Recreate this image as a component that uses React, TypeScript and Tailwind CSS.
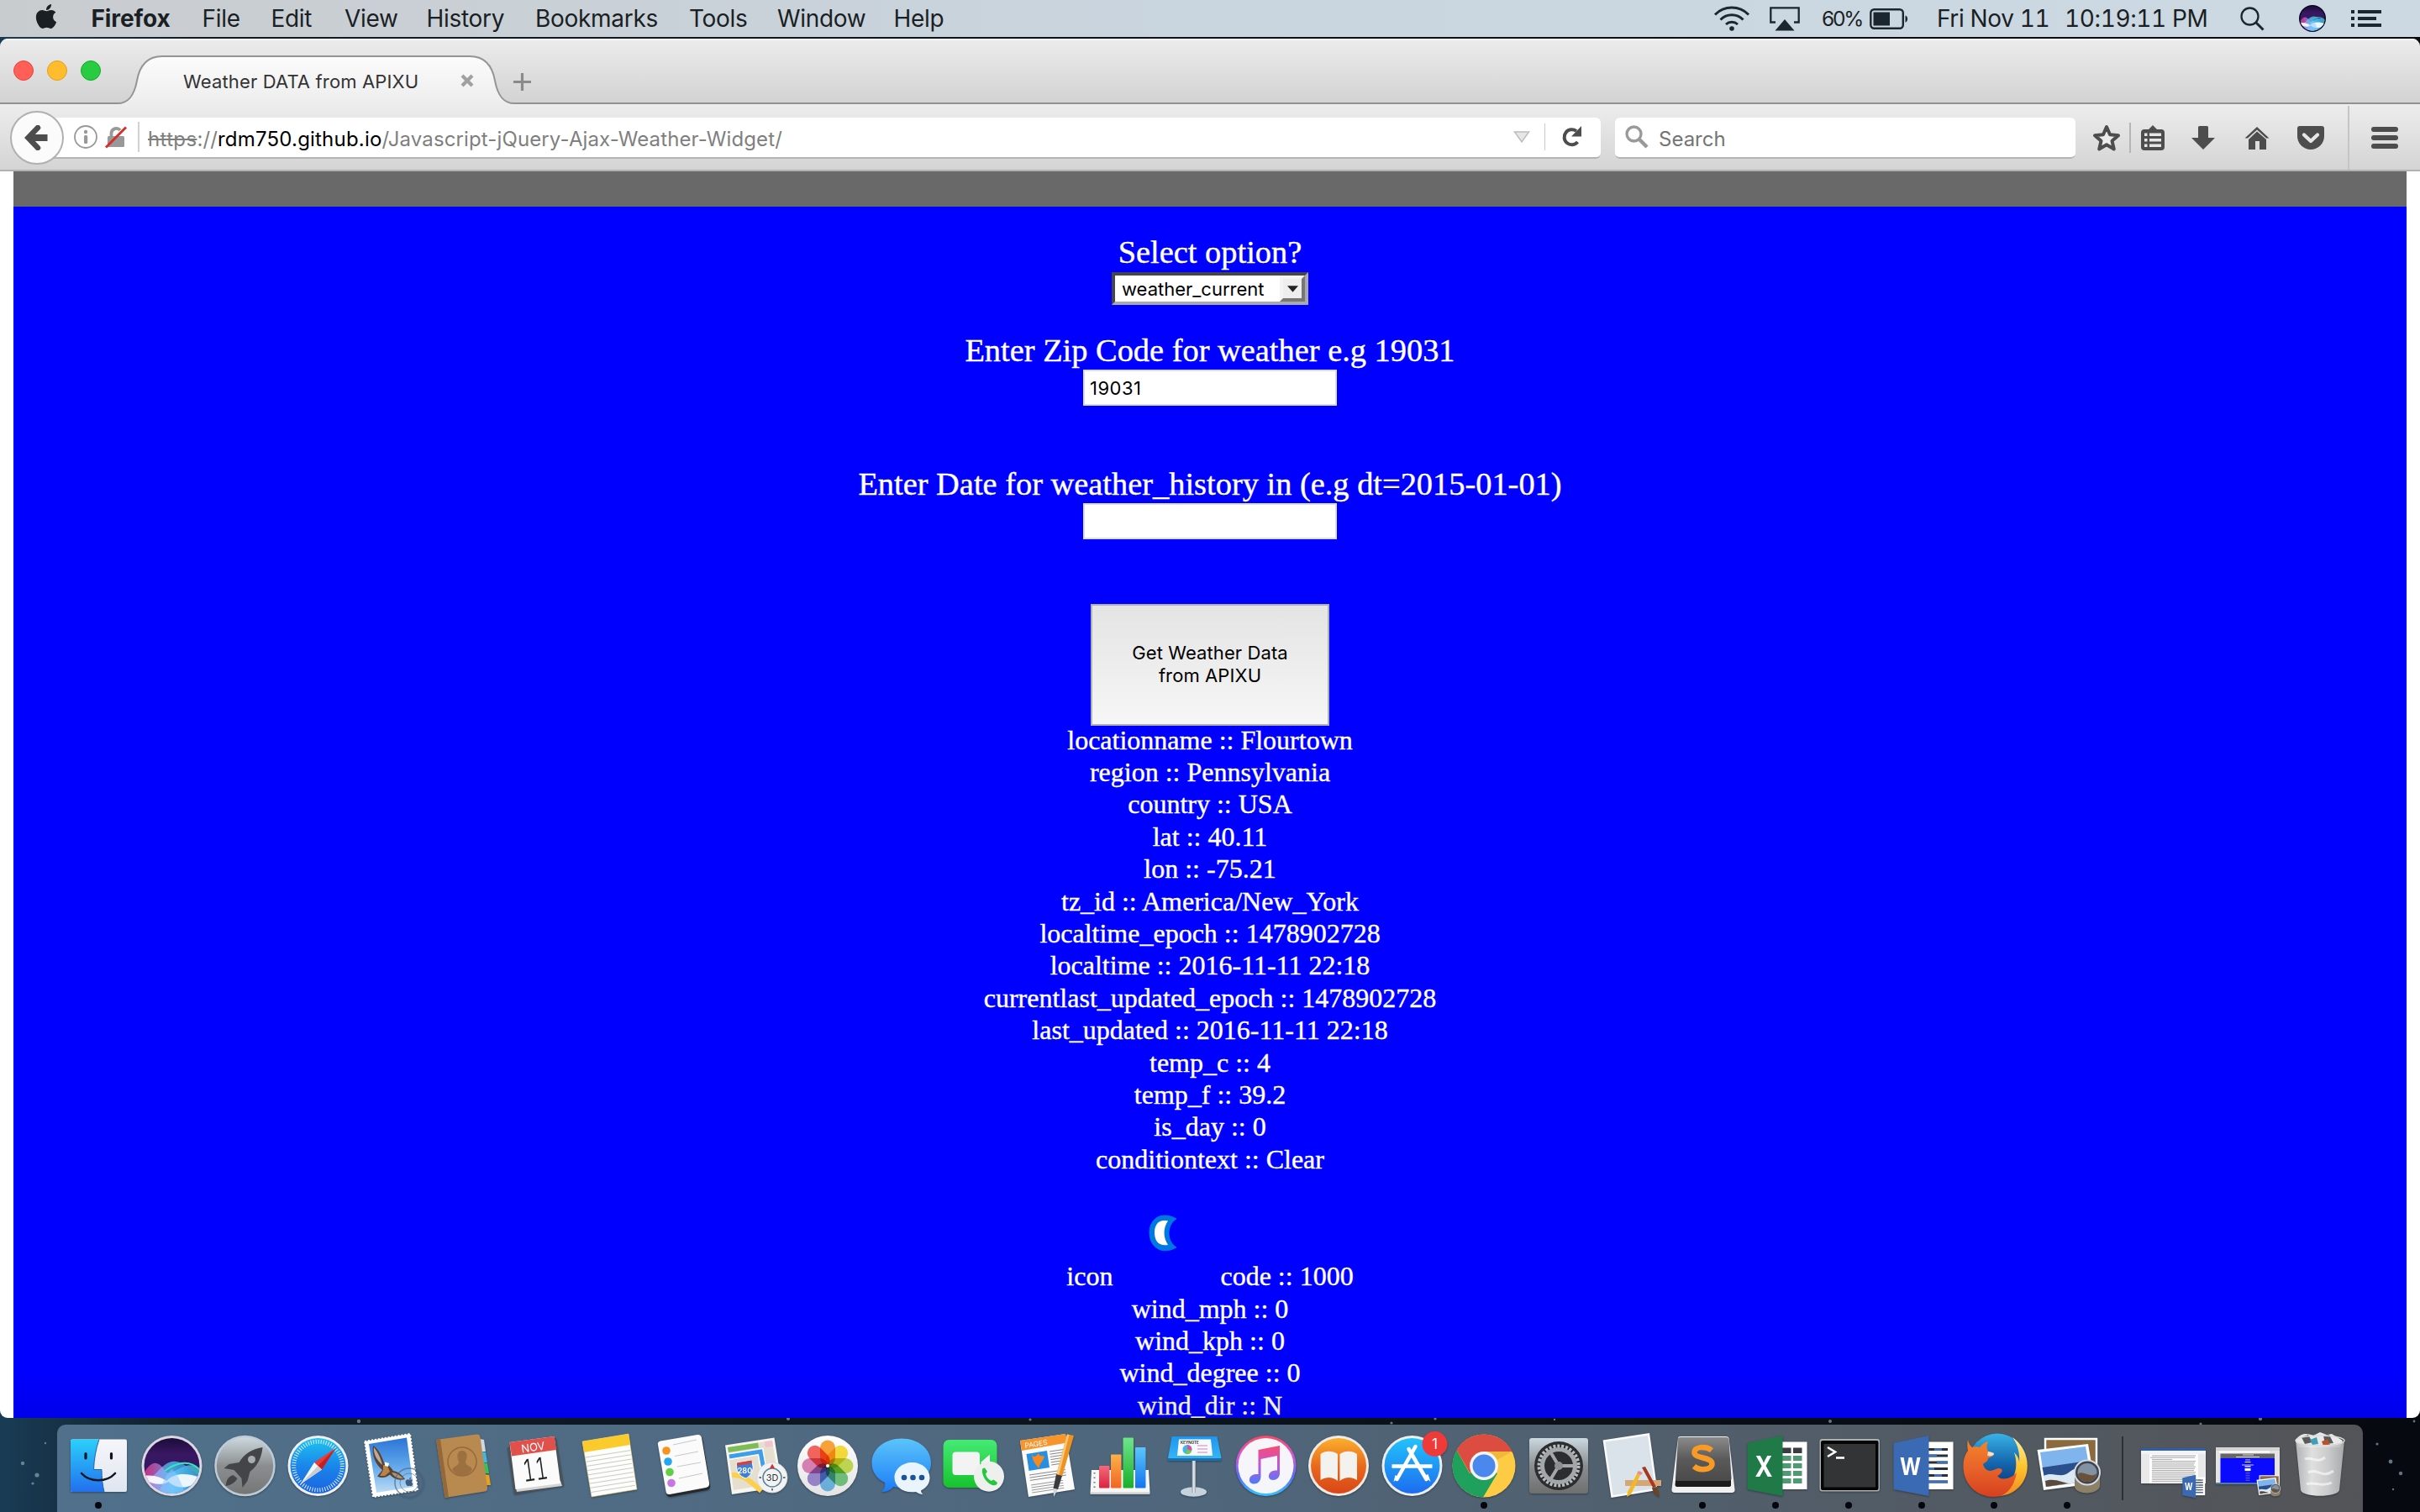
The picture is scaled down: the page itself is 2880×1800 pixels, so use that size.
import type { ReactNode } from "react";
import { FaApple } from "react-icons/fa";

function Grad({ id, stops, x2 = 0, y2 = 1 }: { id: string; stops: string[]; x2?: number; y2?: number }) {
  return (
    <linearGradient id={id} x1="0" y1="0" x2={x2} y2={y2}>
      {stops.map((c, i) => (
        <stop key={i} offset={i / (stops.length - 1)} stopColor={c} />
      ))}
    </linearGradient>
  );
}

/* ---------- menu bar ---------- */

const menus: [string, string][] = [
  ["File", "w-[82px]"],
  ["Edit", "w-[87.5px]"],
  ["View", "w-[97.5px]"],
  ["History", "w-[129.5px]"],
  ["Bookmarks", "w-[183px]"],
  ["Tools", "w-[105px]"],
  ["Window", "w-[138.5px]"],
  ["Help", "w-[70px]"],
];

function SiriArt({ id }: { id: string }) {
  return (
    <g>
      <defs>
        <Grad id={id + "bg"} stops={["#0d0726", "#3a1763", "#2a1a5e", "#25407a"]} />
        <Grad id={id + "w1"} stops={["#ff2f8e", "#7fb6ff", "#35e0c4"]} x2={1} y2={0} />
        <Grad id={id + "w2"} stops={["#d08bff", "#4bd9ff", "#2a7bd6"]} x2={1} y2={0} />
        <clipPath id={id + "c"}>
          <circle cx="42" cy="42" r="33" />
        </clipPath>
      </defs>
      <g clipPath={`url(#${id}c)`}>
        <rect width="84" height="84" fill={`url(#${id}bg)`} />
        <path d="M8 52C18 34 26 36 34 48S60 26 78 50V84H8Z" fill={`url(#${id}w1)`} opacity="0.75" />
        <path d="M8 60C22 58 28 40 42 37S64 50 78 54V84H8Z" fill={`url(#${id}w2)`} opacity="0.7" />
        <path d="M8 54C20 52 30 56 36 60C44 50 62 50 78 57C66 68 50 72 38 61C30 66 18 64 8 58Z" fill="#fff" opacity="0.9" />
        <path d="M24 84C28 66 36 50 42 46C50 52 56 68 60 84Z" fill="#8ec5ff" opacity="0.5" />
        <path d="M34 48S60 26 78 50" fill="none" stroke="#37e6c0" strokeWidth="2" />
      </g>
    </g>
  );
}

function MenuBar() {
  return (
    <header className="flex h-[44px] shrink-0 items-center bg-linear-to-r from-[#c9cccf] via-[#c9d5df] to-[#cdd9e2] text-[28px] tracking-[-0.3px] whitespace-nowrap text-[#1a1f24]">
      <FaApple className="mt-[-5px] ml-[39px] h-[33px] w-[32px] shrink-0" />
      <span className="ml-[37.5px] w-[132px] font-bold tracking-[-0.1px]">Firefox</span>
      {menus.map(([label, w]) => (
        <span key={label} className={w}>{label}</span>
      ))}
      <div className="ml-auto flex items-center">
        <svg className="h-[30px] w-[44px]" viewBox="0 0 44 30" fill="none" stroke="#1b262e" strokeWidth="3">
          <path d="M2 10.5a28 28 0 0 1 40 0M8.5 16.500a19 19 0 0 1 27 0M15 22a10.500 10.500 0 0 1 14 0" />
          <circle cx="22" cy="27" r="2.800" fill="#1b262e" stroke="none" />
        </svg>
        <svg className="ml-[23px] h-[30px] w-[36px]" viewBox="0 0 36 30">
          <path d="M7 19.500H1.300V2.300H34.700V19.500H29" fill="none" stroke="#1b262e" strokeWidth="2.300" />
          <path d="M18 16L29.500 29.500H6.500Z" fill="#1b262e" />
        </svg>
        <span className="ml-[26px] w-[57px] text-[24.5px] tracking-[-2.200px]">60%</span>
        <svg className="mt-[1px] h-[26px] w-[47px]" viewBox="0 0 47 26">
          <rect x="1.300" y="1.300" width="38.500" height="22.500" rx="4" fill="none" stroke="#1b262e" strokeWidth="2.400" />
          <rect x="4.500" y="4.500" width="19.500" height="16" fill="#1b262e" />
          <path d="M42.500 8.500c3.500 1 3.500 7 0 8.200z" fill="#1b262e" />
        </svg>
        <span className="ml-[33px] w-[152px] tracking-[-0.350px] tabular-nums">Fri Nov 11</span>
        <span className="w-[209px] tracking-[-0.400px] tabular-nums">10:19:11 PM</span>
        <svg className="h-[29px] w-[29px]" viewBox="0 0 29 29" fill="none" stroke="#1b262e">
          <circle cx="11.500" cy="11.500" r="10" strokeWidth="2.300" />
          <path d="M18.500 18.500L27.500 27.500" strokeWidth="3" />
        </svg>
        <svg className="ml-[41px] size-[32px]" viewBox="6 6 72 72">
          <circle cx="42" cy="42" r="36" fill="#04041c" />
          <SiriArt id="sm" />
        </svg>
        <svg className="mr-[46px] ml-[30px] h-[20px] w-[36px]" viewBox="0 0 36 20" fill="#1b262e">
          <path d="M0 0h4v4H0zM8 0h28v4H8zM0 8h4v4H0zM8 8h22v4H8zM0 16h4v4H0zM8 16h28v4H8z" />
        </svg>
      </div>
    </header>
  );
}

/* ---------- browser chrome ---------- */

function TabStrip() {
  return (
    <div className="flex h-[78px] bg-linear-to-b from-[#ececec] to-[#d2d2d2] shadow-[inset_0_2px_0_#f6f6f6,inset_0_-2px_0_#929292]">
      <div className="mt-[26px] ml-[16px] flex h-[24px] w-[124px] gap-[16px]">
        <i className="size-[24px] rounded-full border border-[#e2463f] bg-[#ff5f57]" />
        <i className="size-[24px] rounded-full border border-[#dea123] bg-[#ffbd2e]" />
        <i className="size-[24px] rounded-full border border-[#12ac28] bg-[#28cc40]" />
      </div>
      <div className="relative flex h-[78px] w-[476px] items-center pt-[24px] pl-[78px]">
        <svg className="absolute inset-0 h-[78px] w-[476px]" viewBox="0 0 476 78">
          <defs>
            <Grad id="tab" stops={["#fcfcfc", "#ededed"]} />
          </defs>
          <path d="M0 78V77C14 77 20 66 23 50C26 33 34 21 53 21H419C438 21 446 33 449 50C452 66 458 77 472 77V78Z" fill="url(#tab)" />
          <path d="M0 77C14 77 20 66 23 50C26 33 34 21 53 21H419C438 21 446 33 449 50C452 66 458 77 472 77" fill="none" stroke="#949494" strokeWidth="2" />
        </svg>
        <span className="relative w-[330px] text-[22px] tracking-[0.150px] whitespace-nowrap text-[#333]">Weather DATA from APIXU</span>
        <svg className="relative mt-[-3px] size-[16px]" viewBox="0 0 16 16" stroke="#a0a0a0" strokeWidth="4.200">
          <path d="M2 2L14 14M14 2L2 14" />
        </svg>
      </div>
      <svg className="mt-[41px] ml-[-5px] size-[21px]" viewBox="0 0 21 21" stroke="#8a8a8a" strokeWidth="3.200">
        <path d="M10.500 0V21M0 10.500H21" />
      </svg>
    </div>
  );
}

function Toolbar() {
  return (
    <div className="flex h-[80px] items-center border-b-[2px] border-[#b1b1b1] bg-linear-to-b from-[#ededed] to-[#d4d4d4] pt-[2px] text-[24px] whitespace-nowrap">
      <div className="z-10 ml-[12px] flex size-[64px] shrink-0 items-center justify-center rounded-full border-2 border-[#b0b0b0] bg-[#fbfbfb]">
        <svg className="mr-[3px] h-[30px] w-[28px]" viewBox="0 0 28 30" fill="none" stroke="#4d4d4d" strokeWidth="8">
          <path d="M27.500 15H8" />
          <path d="M16 3L4.500 15L16 27" strokeWidth="6.500" strokeLinecap="round" strokeLinejoin="miter" />
        </svg>
      </div>
      <div className="ml-[-16px] flex h-[49px] w-[1845px] items-center rounded-r-[6px] border-b-2 border-[#b4b4b4] bg-white">
        <svg className="ml-[28px] size-[28px]" viewBox="0 0 28 28">
          <circle cx="14" cy="14" r="13" fill="none" stroke="#999" strokeWidth="1.800" />
          <circle cx="14" cy="8" r="2.200" fill="#999" />
          <rect x="12" y="12" width="4.200" height="10" rx="1.500" fill="#999" />
        </svg>
        <svg className="ml-[9px] h-[27px] w-[26px]" viewBox="0 0 26 27">
          <rect x="3" y="12" width="20" height="13" rx="1.500" fill="#999" />
          <path d="M7.500 13V8a6 6 0 0 1 10.500-3" fill="none" stroke="#999" strokeWidth="3.800" />
          <path d="M1 25.500L25 1.500" stroke="#d92d28" strokeWidth="3" />
        </svg>
        <i className="ml-[13px] h-[36px] w-[2px] bg-[#d2d2d2]" />
        <span className="mt-[5px] ml-[10px] tracking-[0.120px] text-[#7f7f7f]">
          <span className="tracking-[0.350px] line-through decoration-[2px]">https</span>://
          <span className="tracking-[0.200px] text-black">rdm750.github.io</span>/Javascript-jQuery-Ajax-Weather-Widget/
        </span>
        <svg className="ml-auto h-[14px] w-[20px]" viewBox="0 0 20 14">
          <path d="M1.500 1H18.500L10 13Z" fill="#e6e6e6" stroke="#bdbdbd" strokeWidth="1.500" />
        </svg>
        <i className="ml-[17px] h-[32px] w-[1.500px] bg-[#c8c8c8]" />
        <svg className="mr-[22px] ml-[20px] h-[26px] w-[24px]" viewBox="0 0 24 26">
          <path d="M18.500 19A9 9 0 1 1 17 6" fill="none" stroke="#4d4d4d" strokeWidth="4" />
          <path d="M23 0V12.500H11Z" fill="#4d4d4d" />
        </svg>
      </div>
      <div className="ml-[17px] flex h-[49px] w-[548px] items-center rounded-[6px] border-b-2 border-[#b4b4b4] bg-white">
        <svg className="ml-[12px] size-[28px]" viewBox="0 0 28 28" fill="none" stroke="#999">
          <circle cx="10.500" cy="10.500" r="8.500" strokeWidth="3.300" />
          <path d="M17 17L26 26" strokeWidth="4.500" />
        </svg>
        <span className="mt-[5px] ml-[12px] text-[#757575]">Search</span>
      </div>
      <svg className="ml-[20px] h-[33px] w-[34px]" viewBox="0 0 34 33">
        <path d="M17 3L21 12.300L31 13.200L23.500 19.800L25.800 29.500L17 24.300L8.200 29.500L10.500 19.800L3 13.200L13 12.300Z" fill="#ececec" stroke="#4d4d4d" strokeWidth="4" strokeLinejoin="round" />
      </svg>
      <i className="ml-[10px] h-[36px] w-[2px] bg-[#b5b5b5]" />
      <svg className="ml-[12px] h-[30px] w-[28px]" viewBox="0 0 28 30">
        <path d="M4 5H9L14 0L19 5H24a4 4 0 0 1 4 4V26a4 4 0 0 1-4 4H4a4 4 0 0 1-4-4V9a4 4 0 0 1 4-4Z" fill="#4d4d4d" />
        <path d="M10 9.500H24v3.500H10zM10 16H24v3.500H10zM10 22.500H24v3.500H10zM4 9.500h3.500v3.500H4zM4 16h3.500v3.500H4zM4 22.500h3.500v3.500H4z" fill="#e6e6e6" />
      </svg>
      <svg className="ml-[32px] h-[28px] w-[28px]" viewBox="0 0 28 28" fill="#4d4d4d">
        <path d="M8 1.500a1.500 1.500 0 0 1 1.500-1.500h9a1.500 1.500 0 0 1 1.500 1.500V14H28L14 28L0 14H8Z" />
      </svg>
      <svg className="ml-[34px] h-[28px] w-[32px]" viewBox="0 0 32 28" fill="#4d4d4d">
        <path d="M16 6.500L27 16V28H19V18H14V28H6V16Z" />
        <path d="M1.500 14.500H5L16 4.500L27 14.500H30.500L16 1Z" />
      </svg>
      <svg className="ml-[32px] h-[28px] w-[32px]" viewBox="0 0 32 28">
        <path d="M3 0H29a3 3 0 0 1 3 3V12a16 16 0 0 1-32 0V3a3 3 0 0 1 3-3Z" fill="#4d4d4d" />
        <path d="M8 10.500L16 18L24 10.500" fill="none" stroke="#e6e6e6" strokeWidth="4.300" strokeLinecap="round" strokeLinejoin="round" />
      </svg>
      <i className="ml-[28px] h-full w-[2px] bg-[#c5c5c5]" />
      <svg className="ml-[26px] h-[26px] w-[32px]" viewBox="0 0 32 26" fill="#4d4d4d">
        <rect width="32" height="6" rx="3" />
        <rect y="10" width="32" height="6" rx="3" />
        <rect y="20" width="32" height="6" rx="3" />
      </svg>
    </div>
  );
}

/* ---------- web page ---------- */

const before = [
  "locationname :: Flourtown",
  "region :: Pennsylvania",
  "country :: USA",
  "lat :: 40.11",
  "lon :: -75.21",
  "tz_id :: America/New_York",
  "localtime_epoch :: 1478902728",
  "localtime :: 2016-11-11 22:18",
  "currentlast_updated_epoch :: 1478902728",
  "last_updated :: 2016-11-11 22:18",
  "temp_c :: 4",
  "temp_f :: 39.2",
  "is_day :: 0",
  "conditiontext :: Clear",
];
const after = ["wind_mph :: 0", "wind_kph :: 0", "wind_degree :: 0", "wind_dir :: N"];

function Page() {
  return (
    <main className="flex min-h-0 flex-1 flex-col bg-white px-[16px]">
      <div className="h-[42px] shrink-0 bg-[#696969]" />
      <div className="relative flex min-h-0 flex-1 flex-col items-center overflow-hidden bg-[#0000ff] pt-[32px] font-['Liberation_Serif',serif] text-[38.4px] leading-[44px] whitespace-nowrap text-white [-webkit-text-stroke:0.4px_#fff]">
        <label>Select option?</label>
        <div className="mt-[2px] flex h-[39px] w-[234px] shrink-0 border-[4px] border-t-[#464646] border-r-[#a9a9a9] border-b-[#a9a9a9] border-l-[#464646] bg-white font-['Inter',sans-serif] text-[22px] leading-[32px] text-black [-webkit-text-stroke:0]">
          <span className="flex-1 pl-[8px]">weather_current</span>
          <span className="flex w-[30px] items-center justify-center border-[4px] border-t-[#f4f4f4] border-r-[#777] border-b-[#777] border-l-[#f4f4f4] bg-[#eee]">
            <svg className="h-[8px] w-[13px]" viewBox="0 0 14 8">
              <path d="M0 0H14L7 8Z" fill="#222" />
            </svg>
          </span>
        </div>
        <label className="mt-[32px]">Enter Zip Code for weather e.g 19031</label>
        <div className="mt-[1px] h-[43px] w-[302px] shrink-0 border-2 border-[#dcdcdc] bg-white pl-[6px] font-['Inter',sans-serif] text-[22px] leading-[40px] tracking-[0.500px] text-black [-webkit-text-stroke:0]">19031</div>
        <label className="mt-[71px]">Enter Date for weather_history in (e.g dt=2015-01-01)</label>
        <div className="mt-[1px] h-[43px] w-[302px] shrink-0 border-2 border-[#dcdcdc] bg-white" />
        <button className="mt-[77px] h-[145px] w-[284px] shrink-0 border-2 border-[#b0b0b0] bg-linear-to-b from-[#e4e4e4] to-[#f6f6f6] pb-[2px] font-['Inter',sans-serif] text-[22px] leading-[27px] tracking-[0.100px] text-black [-webkit-text-stroke:0]">
          Get Weather Data
          <br />
          from APIXU
        </button>
        <div className="mt-[-2.500px] flex flex-col items-center text-[32px] leading-[38.4px]">
          {before.map((t) => (
            <p key={t}>{t}</p>
          ))}
          <div className="flex h-[139.400px] items-end">
            <span>icon</span>
            <svg className="mb-[8px] size-[128px]" viewBox="0 0 128 128">
              <path d="M76 48C58 38 44 48 44 64.500S58 92 76 82C64 75 64 55 76 48Z" fill="#0078e0" stroke="#0078e0" strokeWidth="1" strokeLinejoin="round" />
              <path d="M66 50.500C54 48 50 56 50 64.500S54 81 66 79C60 70 60 59 66 50.500Z" fill="#fff" />
            </svg>
            <span>code :: 1000</span>
          </div>
          {after.map((t) => (
            <p key={t} className="last:pt-[3px] last:leading-[32px]">{t}</p>
          ))}
        </div>
        <div className="absolute inset-x-0 bottom-0 h-[56px] bg-linear-to-b from-transparent to-black/8" />
      </div>
    </main>
  );
}

/* ---------- dock ---------- */

function Art({ children }: { children: ReactNode }) {
  return (
    <svg className="size-[84px] shrink-0 overflow-visible drop-shadow-[0_1px_1px_rgba(0,0,0,0.35)]" viewBox="0 0 84 84">
      {children}
    </svg>
  );
}

function ScribbleLines({ x, y, w, n, gap, color = "#c9c9c9", tilt = -8 }: { x: number; y: number; w: number; n: number; gap: number; color?: string; tilt?: number }) {
  return (
    <g stroke={color} strokeWidth="1">
      {Array.from({ length: n }, (_, i) => (
        <path key={i} d={`M${x + i * gap * 0.14} ${y + i * gap}l${w} ${(w * tilt) / 54}`} />
      ))}
    </g>
  );
}

const photoPetals = ["#f7941d", "#f2d41f", "#b4cf3a", "#5cb56a", "#5aa5d8", "#8a74c0", "#cf6fa6", "#f05045"];

function PreviewArt() {
  return (
    <g>
      <rect x="16" y="10" width="61" height="40" fill="#8a6a3e" stroke="#fff" strokeWidth="2.500" />
      <path d="M6.500 23L67 16L75 63L14 71Z" fill="#fff" />
      <path d="M10 26L64 19L67.500 39L13 46Z" fill="#7fb4ec" />
      <path d="M12.500 44L67 36L71 60L17 67Z" fill="#2a4f8c" />
      <path d="M14 54C26 48 34 58 44 50S60 44 69 46L71 60L17 67Z" fill="#dbe9f4" />
      <path d="M16 60C26 56 38 62 44 63L17 67Z" fill="#5c4a3a" />
      <path d="M51 50V67C53 77 79 77 81 66V50Z" fill="#8d8068" />
      <ellipse cx="66" cy="50" rx="15" ry="14.500" fill="#3b4450" stroke="#d9d9d9" strokeWidth="2" />
      <ellipse cx="66" cy="50" rx="11.500" ry="11" fill="#8292a2" />
      <path d="M55 52C60 46 70 58 77 51C76 64 57 64 55 52Z" fill="#6a5138" />
    </g>
  );
}

function WordArt() {
  return (
    <g>
      <path d="M44 13.500H79.500V70H44Z" fill="#fff" />
      <g strokeWidth="2.800" stroke="#2b2f36">
        <path d="M50 22.500H73M50 30H73M50 38H73M50 45.500H73M50 53.500H73M50 61H73" />
      </g>
      <g strokeWidth="2.800" stroke="#3f6fb5">
        <path d="M57 22.500H66M50 30H60M60 38H73M50 45.500H57M57 53.500H66M50 61H73" />
      </g>
      <path d="M8.500 15L50.500 6V78L8.500 70Z" fill="#3a6ab4" />
      <text x="28.500" y="53" textAnchor="middle" fontFamily="Inter" fontWeight="700" fontSize="29" textLength="25" lengthAdjust="spacingAndGlyphs" fill="#fff">W</text>
    </g>
  );
}

const apps: { name: string; open?: boolean; art: ReactNode }[] = [
  {
    name: "Finder",
    open: true,
    art: (
      <>
        <defs>
          <Grad id="fa" stops={["#2bd0fb", "#2270ee"]} />
          <Grad id="fb" stops={["#f6f6fa", "#dfe6f0"]} />
        </defs>
        <rect x="9" y="10.500" width="67" height="62.500" rx="2" fill="url(#fb)" />
        <path d="M11 10.500H43C39 22 37 34 36.500 46.500H46C46 56 47 65 49 73H11a2 2 0 0 1-2-2V12.500a2 2 0 0 1 2-2Z" fill="url(#fa)" />
        <path d="M43 10.500C39 22 37 34 36.500 46.500H46C46 56 47 65 49 73" fill="none" stroke="#2a5fae" strokeWidth="1" />
        <path d="M27 27.500V33M57.500 27.500V33" stroke="#10161f" strokeWidth="3.200" strokeLinecap="round" />
        <path d="M22 51C32 62 52 62 62 51" fill="none" stroke="#10161f" strokeWidth="2.600" strokeLinecap="round" />
      </>
    ),
  },
  {
    name: "Siri",
    art: (
      <g transform="translate(1.5 0)">
        <circle cx="42" cy="42" r="36" fill="#dcd8e2" />
        <SiriArt id="lg" />
      </g>
    ),
  },
  {
    name: "Launchpad",
    art: (
      <g transform="translate(1.5 0)">
        <defs>
          <Grad id="lp" stops={["#cfdbe0", "#8b8e90", "#757575"]} />
        </defs>
        <circle cx="42" cy="42" r="35" fill="url(#lp)" stroke="#bccbd6" strokeWidth="2.500" />
        <g fill="#434548">
          <path d="M63 20C50 22 41 28 35 38L23 40L17 45L29 47L38 57L39 68L45 60L48 49C57 42 62 32 63 20Z" />
          <path d="M28 53C21 55 20 60 19 66C26 65 30 62 33 57Z" />
        </g>
        <circle cx="50" cy="34.500" r="4.500" fill="#a7adb0" />
      </g>
    ),
  },
  {
    name: "Safari",
    art: (
      <g transform="translate(1.5 0)">
        <defs>
          <Grad id="sf" stops={["#1fc4ef", "#1a86ea", "#1b62e0"]} />
        </defs>
        <circle cx="42" cy="42" r="36" fill="#eef0f2" />
        <circle cx="42" cy="42" r="33" fill="url(#sf)" />
        <circle cx="42" cy="42" r="28.800" fill="none" stroke="#e2f1fb" strokeWidth="5" strokeDasharray="1 2.016" />
        <path d="M63 21L46.500 46.500L37.500 38Z" fill="#ec3a34" />
        <path d="M63 21L46.500 46.500L42 42Z" fill="#c4201f" />
        <path d="M21 64L37.500 38L46.500 46.500Z" fill="#f6f6f6" />
        <path d="M21 64L42 42L46.500 46.500Z" fill="#c9cdd2" />
      </g>
    ),
  },
  {
    name: "Mail",
    art: (
      <>
        <defs>
          <Grad id="ml" stops={["#2c74d6", "#5fa6ea", "#bcdcf4"]} />
        </defs>
        <path d="M12 13L66 4L75 71L22 79Z" fill="#fff" stroke="#fff" strokeWidth="2" strokeDasharray="2.200 1.800" />
        <path d="M17 16L62 8.500L70 67L26 74Z" fill="url(#ml)" />
        <path d="M22 18C28 21 33 31 35.500 40C41 40 44 45 46 48C52 49 57 53 60 58C52 60 46 57 42 52.500C37 56.500 32 57 27 54.500L33 47C25 40 20 30 22 18Z" fill="#5d432f" />
        <path d="M23 20C27 25 31 32 33 41C27 36 22 28 23 20Z" fill="#b9ab9c" />
        <path d="M44 50C50 50 55 54 58 57C52 58 47 55 44 50Z" fill="#a8977f" />
        <path d="M34 41l5 1 3 7-6 5-6 0 4-7z" fill="#b88248" />
        <path d="M36 37.500l5 1.500-1 4-4-1z" fill="#fff" />
        <circle cx="65" cy="62" r="17" fill="none" stroke="#4d6580" strokeOpacity="0.700" strokeWidth="1.500" />
        <circle cx="65" cy="62" r="11" fill="none" stroke="#4d6580" strokeOpacity="0.600" strokeWidth="1" />
        <g transform="translate(59 55) scale(0.75)" color="#435c7c">
          <FaApple />
        </g>
      </>
    ),
  },
  {
    name: "Contacts",
    art: (
      <>
        <path d="M62 10L67 11L69 25H64Z" fill="#cfd9de" />
        <path d="M64 25L69 26L71 38H66Z" fill="#46b6dc" />
        <path d="M66 38L71 39L73 51H67Z" fill="#3fbd5a" />
        <path d="M67 52L73 53L75 65H69Z" fill="#e8a21c" />
        <path d="M10 11L58 4.500Q62 4 62.500 8L71 68Q71.500 72 68 72.500L20.500 80Z" fill="#b98a50" />
        <path d="M10 11L15 10.300L25 79.300L20.500 80Z" fill="#94683a" />
        <circle cx="41" cy="37" r="17" fill="none" stroke="#96693a" strokeWidth="1.500" />
        <path d="M41 24C47 24 48 31 45 37C45 42 51 42 53 46C48 56 34 56 29 46C32 42 37 42 37 37C34 31 35 24 41 24Z" fill="#9c7040" />
      </>
    ),
  },
  {
    name: "Calendar",
    art: (
      <>
        <path d="M9 20L67 9L76 66L17 76Z" fill="#4a5258" />
        <path d="M18.500 66L72 60L74 66L20 73Z" fill="#d5d5d5" />
        <path d="M11.500 14L64.500 7L72 63L18.500 70Z" fill="#fbfbfb" />
        <path d="M11.500 14L64.500 7L67 23L14 30.500Z" fill="#e2504b" />
        <text transform="translate(40 24.500) rotate(-8)" textAnchor="middle" fontFamily="Inter" fontSize="13" fill="#fff">NOV</text>
        <text transform="translate(43.500 59) rotate(-8)" textAnchor="middle" fontFamily="Inter" fontWeight="300" fontSize="36" fill="#222" className="tabular-nums" textLength="30" lengthAdjust="spacingAndGlyphs">11</text>
      </>
    ),
  },
  {
    name: "Notes",
    art: (
      <>
        <path d="M11 13L66 4L76 70L22 79Z" fill="#fdfdfa" stroke="#d9c67a" strokeWidth="0.600" />
        <path d="M11 13L66 4L68 17L13 26Z" fill="#fbcb2e" />
        <ScribbleLines x={15} y={32} w={53} n={9} gap={5.200} tilt={-8.500} />
      </>
    ),
  },
  {
    name: "Reminders",
    art: (
      <>
        <path d="M16 18Q15 15 19 14L62 7Q66 6 67 10L76 65Q77 70 72 71L29 79Q25 79 24 75Z" fill="#26282b" />
        <path d="M14 17Q13 13.500 17 12.500L61 5Q65 4.500 66 8.500L75 62Q76 67 71 68L28 76Q24 76.500 23.500 72.500Z" fill="#fbfbfb" />
        <circle cx="24" cy="24" r="4.800" fill="#f7931e" />
        <circle cx="26" cy="37" r="4.800" fill="#22a7f0" />
        <circle cx="28" cy="49.500" r="4.800" fill="#5fcf45" />
        <circle cx="30" cy="62.500" r="4.800" fill="#c678e0" />
        <path d="M32 17L60 11M34 30.500L62 25M37 43L65 38M39 57L67 51" stroke="#c8c8c8" strokeWidth="1" />
      </>
    ),
  },
  {
    name: "Maps",
    art: (
      <>
        <path d="M7 17.500L65.500 8.500L75 67L15 76Z" fill="#f7f5f0" />
        <path d="M10 20L63 12L71 62L17 71Z" fill="#e6dfd0" />
        <path d="M10 20L46 14.500L47 20.500L11 26Z" fill="#7ebd54" />
        <path d="M54 13L63 12L64 19L55 20Z" fill="#f1c3cf" />
        <path d="M12 31L49 25L56 66" fill="none" stroke="#fff" strokeWidth="8" />
        <path d="M12 31L49 25L54 52" fill="none" stroke="#3e9fe8" strokeWidth="5" />
        <path d="M15 53C28 52 34 58 50 72" fill="none" stroke="#fbd04a" strokeWidth="6" />
        <path d="M21 38C26 38 34 35 38 36C44 48 36 54 32 57C24 55 19 48 21 38Z" fill="#3b7fd9" stroke="#fff" strokeWidth="1" />
        <path d="M21 38.500L38.500 35.500L39 39L21 42Z" fill="#d9403c" />
        <text x="30.500" y="50.500" textAnchor="middle" fontFamily="Inter" fontWeight="700" fontSize="9" fill="#fff">280</text>
        <circle cx="63" cy="56" r="18" fill="#f0f2f3" stroke="#d4d7da" strokeWidth="0.800" />
        <circle cx="63" cy="56" r="11" fill="none" stroke="#5f7f95" strokeWidth="1.500" />
        <path d="M63 39.500L66 45H60Z" fill="#d9312c" />
        <text x="63" y="60" textAnchor="middle" fontFamily="Inter" fontSize="11" fill="#333">3D</text>
        <path d="M47.500 56h2.500M76 56h2.500M63 69v2.500" stroke="#444" strokeWidth="1.500" />
      </>
    ),
  },
  {
    name: "Photos",
    art: (
      <>
        <defs>
          <Grad id="ph" stops={["#ffffff", "#e3e3e3"]} />
        </defs>
        <circle cx="42" cy="42" r="36" fill="url(#ph)" />
        <g className="isolate">
          {photoPetals.map((c, i) => (
            <rect key={c} x="33" y="11.500" width="18" height="30.500" rx="9" fill={c} opacity="0.880" className="mix-blend-multiply" transform={`rotate(${i * 45} 42 42)`} />
          ))}
        </g>
        <circle cx="42" cy="42" r="2" fill="#fff" />
      </>
    ),
  },
  {
    name: "Messages",
    art: (
      <>
        <defs>
          <Grad id="ms" stops={["#5cc4fa", "#1b7df7"]} />
        </defs>
        <path d="M44 9.500C64 9.500 79 22 79 38.500S64 68 44 68C40 68 37 67.500 34 67C31 71 26 73 20 73C23 70 25 66 24 62C14 57 8.500 49 8.500 38.500C8.500 22 24 9.500 44 9.500Z" fill="url(#ms)" />
        <path d="M56.500 38C68 38 77.500 46 77.500 56C77.500 63 74 67.500 67 71.500C67 73 68 75 69.500 76C66 76 63 74.500 61 73C46 75 35.500 67 35.500 56C35.500 46 45 38 56.500 38Z" fill="#eaf4fc" />
        <circle cx="47" cy="56" r="3.300" fill="#18539c" />
        <circle cx="57.500" cy="56" r="3.300" fill="#18539c" />
        <circle cx="68" cy="56" r="3.300" fill="#18539c" />
      </>
    ),
  },
  {
    name: "FaceTime",
    art: (
      <>
        <defs>
          <Grad id="ft" stops={["#45ea74", "#16c32c"]} />
        </defs>
        <rect x="6.500" y="11" width="64" height="57" rx="7" fill="url(#ft)" />
        <rect x="17.500" y="25.500" width="32.500" height="27.500" rx="4" fill="#f3f3f3" />
        <path d="M51 38L62 28.500V48Z" fill="#f3f3f3" />
        <circle cx="61" cy="54.700" r="18" fill="#eef0ee" />
        <path d="M53.500 45C51 50 56 62 65 65C68 66 71 64.500 71 62L66.500 58.500L63.500 60C60 58 57.500 55 57 51.500L59 49L56 44.500Z" fill="#25c83d" />
      </>
    ),
  },
  {
    name: "Pages",
    art: (
      <>
        <path d="M11 12L65 4L76 70L21 79Z" fill="#fbfbfb" />
        <path d="M11 12L65 4L67 14.500L13 24Z" fill="#f7942a" />
        <text transform="translate(17 21) rotate(-9)" fontFamily="Inter" fontSize="8.500" fill="#fff">PAGES</text>
        <path d="M18.500 28L43 24L46 44L21.500 48Z" fill="#2a8ee0" />
        <path d="M25 28C28 34 30 30 33 27C34 32 38 29 40 31C38 37 35 38 33 45C30 40 26 38 25 28Z" fill="#f58a1f" />
        <ScribbleLines x={46} y={25} w={16} n={6} gap={3.200} color="#888" />
        <ScribbleLines x={22} y={53} w={43} n={3} gap={3.200} color="#888" />
        <ScribbleLines x={24} y={65} w={38} n={4} gap={3} color="#999" />
        <path d="M67 4.500L75 6L61 55L54 53Z" fill="#ee9322" />
        <path d="M67 4.500L69.500 5L57 54L54 53Z" fill="#f9c777" />
        <path d="M54 52L61 54L56 70L50.500 69Z" fill="#3a3a3c" />
        <path d="M50.500 69L56 70L51 79Z" fill="#cfd3d8" />
      </>
    ),
  },
  {
    name: "Numbers",
    art: (
      <>
        <defs>
          <Grad id="nr" stops={["#f36a78", "#d92340"]} />
          <Grad id="no" stops={["#fbb24a", "#f06522"]} />
          <Grad id="ng" stops={["#6fe58c", "#17b029"]} />
          <Grad id="nb" stops={["#5cc6fb", "#1374ee"]} />
        </defs>
        <path d="M9 47H77L78.500 74H7.500Z" fill="#f6f6f6" />
        <path d="M7.500 73.500H78.500V76H7.500Z" fill="#cfcfcf" />
        <path d="M12.500 50V72" stroke="#777" strokeWidth="2" strokeDasharray="1.500 4" />
        <rect x="18" y="42" width="12.500" height="26.500" rx="1" fill="url(#nr)" />
        <rect x="32" y="28.500" width="12.500" height="40" rx="1" fill="url(#no)" />
        <rect x="46.500" y="8.500" width="12.500" height="60" rx="1" fill="url(#ng)" />
        <rect x="61" y="20" width="12.500" height="48.500" rx="1" fill="url(#nb)" />
      </>
    ),
  },
  {
    name: "Keynote",
    art: (
      <>
        <defs>
          <Grad id="kn" stops={["#1e96ee", "#36b4f6"]} />
          <Grad id="kp" stops={["#8e9aa5", "#e9eef2", "#8e9aa5"]} x2={1} y2={0} />
        </defs>
        <ellipse cx="43.500" cy="73" rx="15.500" ry="5.800" fill="#c5d3de" />
        <rect x="41.500" y="36" width="4.500" height="38" fill="url(#kp)" />
        <path d="M17.500 7H71.500L76.500 33H13Z" fill="url(#kn)" />
        <path d="M13 33H76.500V36H13Z" fill="#1a6fae" />
        <path d="M26 10.500H64L66 30H24Z" fill="#f7fafc" />
        <text x="28" y="15.500" fontFamily="Inter" fontWeight="700" fontSize="4.500" fill="#333">KEYNOTE</text>
        <circle cx="36" cy="22.500" r="5.500" fill="#3fb5e8" />
        <path d="M36 22.500V17a5.500 5.500 0 0 1 5 7Z" fill="#d94fa0" />
        <path d="M36 22.500L41 24a5.500 5.500 0 0 1-7 4Z" fill="#7ac943" />
        <path d="M48 18h12M48 22h12M48 26h12" stroke="#e0a8d0" strokeWidth="1.500" />
      </>
    ),
  },
  {
    name: "iTunes",
    art: (
      <g transform="translate(1.5 0)">
        <defs>
          <Grad id="itr" stops={["#fb4a63", "#d457d8", "#5a6cf8", "#36c7fb"]} />
          <Grad id="itn" stops={["#fb4c6c", "#c255d8", "#4a7cf8"]} />
        </defs>
        <circle cx="42" cy="42" r="36" fill="url(#itr)" />
        <circle cx="42" cy="42" r="33" fill="#f6f5fa" />
        <path d="M33 23L58.500 18V51C58.500 56 54.500 59 50.500 59S45 56 45.500 53.500C46 49 51 47 55.500 47.500V30L36 34V55C36 60 32 63.500 28 63.500S22 61 22.500 58C23 53 28 51.500 33 52Z" fill="url(#itn)" />
      </g>
    ),
  },
  {
    name: "iBooks",
    art: (
      <g transform="translate(1 0)">
        <defs>
          <Grad id="ib" stops={["#fbb02c", "#e9691d", "#d94617"]} />
        </defs>
        <circle cx="42" cy="42" r="36" fill="#efece8" />
        <circle cx="42" cy="42" r="33" fill="url(#ib)" />
        <path d="M41 28C34 23.500 26 24 20.500 28V59C27 55 35 55 41 60ZM43.500 28C50 23.500 58 24 64 28V59C57.500 55 49.500 55 43.500 60Z" fill="#f4f2ee" />
      </g>
    ),
  },
  {
    name: "App Store",
    art: (
      <g transform="translate(1.5 0)">
        <defs>
          <Grad id="as" stops={["#22c3fb", "#1d6cf0"]} />
        </defs>
        <circle cx="42" cy="42" r="36" fill="#eceef0" />
        <circle cx="42" cy="42" r="33" fill="url(#as)" />
        <g stroke="#fff" strokeWidth="4.500">
          <path d="M18 42.500H66" />
          <path d="M46 19L24 58M38 22L59 58" strokeLinecap="round" />
        </g>
        <path d="M22 53L26 56L20 61ZM56 54L61 52L64 61Z" fill="#fff" />
        <circle cx="69" cy="16" r="15" fill="#ee3b3a" />
        <text x="69" y="22" textAnchor="middle" fontFamily="Inter" fontSize="17" fill="#fff">1</text>
      </g>
    ),
  },
  {
    name: "Chrome",
    open: true,
    art: (
      <>
        <circle cx="42" cy="42" r="37.500" fill="#fecb45" />
        <path d="M42 42L25 51L9.500 23.200A37.500 37.500 0 0 0 41 79.500L58 51Z" fill="#1fa05c" />
        <path d="M9.500 23.200A37.500 37.500 0 0 1 75.500 25H42L25.500 51Z" fill="#dc4c40" />
        <path d="M42 25H75.500L58 35Z" fill="#e6ab2e" opacity="0.600" />
        <circle cx="42" cy="42" r="17" fill="#f4f4f4" />
        <circle cx="42" cy="42" r="13.500" fill="#4a88ee" />
      </>
    ),
  },
  {
    name: "System Preferences",
    art: (
      <>
        <defs>
          <Grad id="sp" stops={["#cbd9e0", "#8a8e90", "#6f6f6f"]} />
        </defs>
        <rect x="9" y="9" width="70" height="66" rx="3" fill="url(#sp)" />
        <circle cx="44" cy="42" r="29" fill="#2b2d2f" />
        <circle cx="44" cy="42" r="23.500" fill="none" stroke="#b9bcbe" strokeWidth="4" strokeDasharray="3 1.922" />
        <circle cx="44" cy="42" r="19.500" fill="none" stroke="#a4a7a9" strokeWidth="5" />
        <path d="M44 42L62 42M44 42L35 27M44 42L35 57" stroke="#a4a7a9" strokeWidth="4" />
        <circle cx="44" cy="42" r="5" fill="#8d9092" />
      </>
    ),
  },
  {
    name: "Applications",
    art: (
      <>
        <path d="M12 12.500L65 4.500L74 70L21.500 78.500Z" fill="#d9e3e9" stroke="#fbfbfb" strokeWidth="2.500" />
        <path d="M37 59H80V66H37Z" fill="#d6a676" />
        <path d="M52 50L56 51L44 76L39 79L40 73Z" fill="#f4b826" />
        <path d="M53 48L58 50L56 53L51 51Z" fill="#e88a96" />
        <path d="M57 44L61 43L74 67L70 68Z" fill="#a5361f" />
        <path d="M69 68L75 67L78 79C74 78 70 74 69 68Z" fill="#6b4425" />
      </>
    ),
  },
  {
    name: "Sublime Text",
    open: true,
    art: (
      <>
        <defs>
          <Grad id="su" stops={["#8b8b8b", "#5a5a5a", "#4a4a4a"]} />
        </defs>
        <path d="M13 9Q13 7 16 7H70Q73 7 73.500 9L80.500 70Q81 74 77 74H9Q5 74 5.500 70Z" fill="#f0f0f0" />
        <path d="M10 59H76V65Q76 67 73 67H12Q9.500 67 9.500 65Z" fill="#1b1b1b" />
        <path d="M13 10Q13 8 16 8H70Q73 8 73.500 10L76.500 57Q76.500 60 73 60H13Q9.500 60 10 57Z" fill="url(#su)" />
        <path d="M53 23.500C46 18 32 19 32.500 26.500C33 34 53.500 31 53.500 39.500C53.500 47.500 38 48 32 42.500" fill="none" stroke="#f99a27" strokeWidth="6.500" />
      </>
    ),
  },
  {
    name: "Excel",
    open: true,
    art: (
      <>
        <path d="M44 13.500H79.500V70H44Z" fill="#fff" />
        <path d="M50 20.500H60.500V27H50ZM63 20.500H73.500V27H63Z" fill="#3a3d40" />
        <path d="M50 30H60.500V36H50ZM63 30H73.500V36H63ZM50 39H60.500V45H50ZM63 39H73.500V45H63ZM50 48H60.500V54H50ZM63 48H73.500V54H63ZM50 57H60.500V63H50ZM63 57H73.500V63H63Z" fill="#4f9a72" />
        <path d="M8.500 15L50.500 6V78L8.500 70Z" fill="#1f7a48" />
        <text x="28" y="55" textAnchor="middle" fontFamily="Inter" fontWeight="700" fontSize="34" textLength="21" lengthAdjust="spacingAndGlyphs" fill="#fff">X</text>
      </>
    ),
  },
  {
    name: "Terminal",
    open: true,
    art: (
      <>
        <rect x="7.500" y="10" width="71.500" height="62.500" rx="3" fill="#a9b0b0" />
        <rect x="9" y="12" width="68.500" height="59" rx="2" fill="#050505" />
        <rect x="12.500" y="16" width="61.500" height="51.500" fill="#333436" />
        <path d="M17 20L26 25.500L17 31" fill="none" stroke="#fff" strokeWidth="2.600" />
        <path d="M27 32.500H37" stroke="#fff" strokeWidth="2.600" />
      </>
    ),
  },
  { name: "Word", open: true, art: <WordArt /> },
  {
    name: "Firefox",
    open: true,
    art: (
      <>
        <defs>
          <Grad id="fxg" stops={["#38b3e6", "#1567b0", "#0b2f6b"]} />
          <Grad id="fxf" stops={["#f3852a", "#e9632a", "#d6401f"]} />
          <Grad id="fxt" stops={["#fff0a0", "#fdc52d", "#f28a1f"]} />
        </defs>
        <circle cx="46" cy="38" r="34.500" fill="url(#fxg)" />
        <path d="M64 8C78 18 84 34 81 50C77 68 62 78 46 78L52 68C66 62 72 44 66 26C70 30 72 34 72 38C73 26 70 16 64 8Z" fill="url(#fxt)" />
        <path d="M11 11C12 16 14 18 16 20C19 19 22 19 25 20C27 17 31 14 35 13C33 17 33 21 35 25C38 26 42 26 42 28C41 31 37 32 35 33C35 37 31 38 29 40C30 43 31 47 37 48C43 48 46 43 51 46C53 48 50 52 46 54C50 60 62 58 69 50C66 68 56 79 42 79C20 79 5 62 5.500 42C5.500 34 8 28 11 24C10 20 10 15 11 11Z" fill="url(#fxf)" />
        <path d="M35 25C38 26 42 26 42 28C41 30 38 31 34 30Z" fill="#fbe3cf" />
      </>
    ),
  },
  { name: "Preview", open: true, art: <PreviewArt /> },
];

function Dock() {
  return (
    <footer className="mt-[8px] ml-[68px] flex h-[104px] w-[2744px] rounded-t-[10px] bg-linear-to-r from-[#50708b] via-[#4f667b] to-[#535457] pt-[7px] pl-[5.200px]">
      {apps.map((a) => (
        <div key={a.name} className="flex w-[86.800px] shrink-0 flex-col items-center">
          <Art>{a.art}</Art>
          {a.open && <i className="mt-[1px] size-[8px] rounded-full bg-[#04060c]" />}
        </div>
      ))}
      <i className="mt-[7px] ml-[21px] h-[76px] w-[2px] shrink-0 bg-[#2c2f36]" />
      <div className="ml-[18px] flex">
        <Art>
          <rect x="3" y="21" width="77" height="42" fill="#e9e9ea" />
          <rect x="3" y="21" width="77" height="3" fill="#2f5fa8" />
          <rect x="3" y="24" width="77" height="4" fill="#f3f3f3" />
          <rect x="13" y="28" width="58" height="35" fill="#fdfdfd" />
          <g stroke="#a6a6a6" strokeWidth="1">
            {Array.from({ length: 15 }, (_, i) => (
              <path key={i} d={`M${i === 1 ? 14 : 16} ${30 + i * 2.200}H${i === 2 ? 40 : 68 - (i % 3)}`} />
            ))}
          </g>
          <g transform="translate(49 50.500) scale(0.380)">
            <WordArt />
          </g>
        </Art>
      </div>
      <div className="ml-[4px] flex">
        <Art>
          <rect x="4" y="20" width="76" height="44" fill="#e4e4e4" />
          <rect x="4" y="20" width="76" height="4" fill="#d4d4d4" />
          <rect x="8" y="24.500" width="60" height="2" fill="#fff" />
          <rect x="9.500" y="27.500" width="64.500" height="5.500" fill="#666" />
          <path d="M36 29H49M28 31.500H56" stroke="#ddd" strokeWidth="1.200" />
          <rect x="9.500" y="33" width="64.500" height="29" fill="#0a0aff" />
          <path d="M39 35H45M35 41H49" stroke="#dfe3ff" strokeWidth="0.900" />
          <path d="M38.500 37.500H45.500M38.500 42.800H45.500" stroke="#fff" strokeWidth="1.200" />
          <path d="M38.500 45H45.500V48H38.500Z" fill="#fff" />
          <path d="M42 49.500V61" stroke="#8d95ff" strokeWidth="5" strokeDasharray="0.600 1.400" />
          <rect x="4" y="62" width="76" height="2" fill="#4f7fa0" />
          <g transform="translate(50 50) scale(0.380)">
            <PreviewArt />
          </g>
        </Art>
      </div>
      <div className="ml-[2px] flex">
        <Art>
          <defs>
            <Grad id="tr" stops={["#b9bbbd", "#ececec", "#d5d6d7", "#b0b1b3"]} x2={1} y2={0} />
          </defs>
          <path d="M13 11C20 1 30 4 34 6L42 2L50 5L56 4L69 12L66 20H16Z" fill="#e9e9e9" />
          <path d="M20 8L28 5L33 14L24 16ZM46 6L53 5L58 15L48 16Z" fill="#5a5a5c" />
          <path d="M30 11L38 8L40 16L33 17Z" fill="#3f9fb8" />
          <path d="M44 13L51 10L54 17L46 18Z" fill="#b4532c" />
          <path d="M13 12C14 19 70 19 71 12L65 71C63 80 21 80 19 71Z" fill="url(#tr)" opacity="0.930" />
          <ellipse cx="42" cy="12" rx="29" ry="6" fill="none" stroke="#dcdcdc" strokeWidth="1.500" />
          <path d="M24 34C32 30 38 40 48 32M28 50C40 44 44 58 58 48M26 64C34 60 44 68 56 62" stroke="#fff" strokeOpacity="0.600" strokeWidth="3" fill="none" />
        </Art>
      </div>
    </footer>
  );
}

/* Faint stars of the wallpaper that show round the dock. */
const stars: [number, number, number][] = [
  [27, 1742, 2.2], [44, 1756, 2.6], [39, 1766, 1.6], [54, 1718, 1.2], [427, 1692, 2.2], [938, 1689, 2],
  [1226, 1690, 1.6], [1656, 1694, 1.6], [1708, 1689, 1.6], [1850, 1690, 1.2], [2178, 1692, 2], [2619, 1695, 1.6],
  [2690, 1689, 2.2], [2829, 1719, 1.6], [2845, 1740, 2.4], [2857, 1754, 2.2], [2848, 1773, 1.2], [2873, 1692, 1.4],
];

export default function App() {
  return (
    <div className="relative isolate flex h-[1800px] w-[2880px] flex-col overflow-hidden bg-linear-to-r from-[#193c55] via-[#0f1c27] via-8% to-[#06090f] font-['Inter',sans-serif]">
      <svg className="absolute inset-0 -z-10 h-[1800px] w-[2880px]" viewBox="0 0 2880 1800">
        {stars.map(([x, y, r]) => (
          <circle key={x} cx={x} cy={y} r={r} fill="#8ba3b5" opacity="0.700" />
        ))}
      </svg>
      <MenuBar />
      <div className="mt-[2px] flex h-[1642px] shrink-0 flex-col overflow-hidden rounded-[9px]">
        <TabStrip />
        <Toolbar />
        <Page />
      </div>
      <Dock />
    </div>
  );
}
